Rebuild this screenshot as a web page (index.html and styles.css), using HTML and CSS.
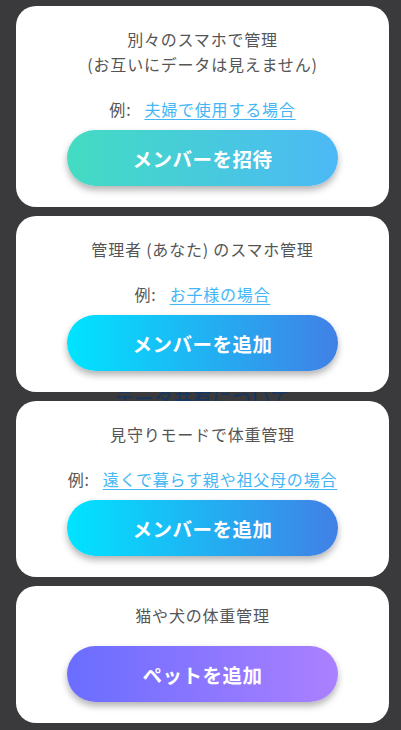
FILE: index.html
```html
<!DOCTYPE html>
<html lang="ja">
<head>
    <meta charset="UTF-8">
    <meta name="viewport" content="width=device-width, initial-scale=1.0">
    <title>メンバー追加</title>
    <link rel="stylesheet" href="styles.css">
</head>
<body>

<div class="list">
    <div class="card">
        <p class="title">別々のスマホで管理<br>(お互いにデータは見えません)</p>
        <p class="example">例:<a href="#">夫婦で使用する場合</a></p>
        <button class="btn invite">メンバーを招待</button>
    </div>

    <div class="card">
        <p class="title">管理者 (あなた) のスマホ管理</p>
        <p class="example">例:<a href="#">お子様の場合</a></p>
        <button class="btn member">メンバーを追加</button>
    </div>

    <!-- 下の見出しがカードの隙間から少し見えている -->
    <div class="peek"><span>データ共有について</span></div>

    <div class="card">
        <p class="title">見守りモードで体重管理</p>
        <p class="example">例:<a href="#">遠くで暮らす親や祖父母の場合</a></p>
        <button class="btn member">メンバーを追加</button>
    </div>

    <div class="card pet">
        <p class="title">猫や犬の体重管理</p>
        <button class="btn petbtn">ペットを追加</button>
    </div>
</div>

</body>
</html>
```

FILE: styles.css
```css
body {
    margin: 0;
    padding: 0;
    background: #3a3a3c;
    font-family: "Noto Sans CJK JP", "Noto Sans", sans-serif;
}

.list {
    padding: 6px 12px 0 16px;
    display: flex;
    flex-direction: column;
}

.card {
    background: #fff;
    border-radius: 20px;
    padding: 21px 0 21px;
    margin-bottom: 9px;
    display: flex;
    flex-direction: column;
    align-items: center;
}
.card.pet { padding-top: 17px; margin-bottom: 0; }

.title {
    margin: 0;
    font-size: 16px;
    line-height: 25px;
    letter-spacing: 0.8px;
    color: #555;
    text-align: center;
}

.example {
    margin: 19px 0 0;
    font-size: 16px;
    line-height: 26px;
    letter-spacing: 0.8px;
    color: #555;
}
.example a {
    color: #45b6f5;
    margin-left: 13px;
    text-decoration: underline;
    text-underline-offset: 3px;
    text-decoration-thickness: 1px;
}

.btn {
    width: 271px;
    height: 56px;
    margin-top: 8px;
    border: none;
    border-radius: 28px;
    color: #fff;
    font-family: inherit;
    font-size: 19.5px;
    font-weight: bold;
    letter-spacing: 0.5px;
    box-shadow: 0 4px 7px rgba(0, 0, 0, 0.3);
    cursor: pointer;
}
.pet .btn { margin-top: 18px; }

.invite { background: linear-gradient(to right, #43dcc2, #4cb9f6); }
.member { background: linear-gradient(to right, #00e4ff, #4180e6); }
.petbtn { background: linear-gradient(to right, #6a6dff, #ab80ff); }

.peek {
    height: 9px;
    margin-top: -9px;
    overflow: hidden;
    text-align: center;
}
.peek span {
    display: block;
    margin-top: -5px;
    font-size: 19px;
    font-weight: 500;
    line-height: 22px;
    color: #18365e;
    letter-spacing: 0.5px;
}
```
